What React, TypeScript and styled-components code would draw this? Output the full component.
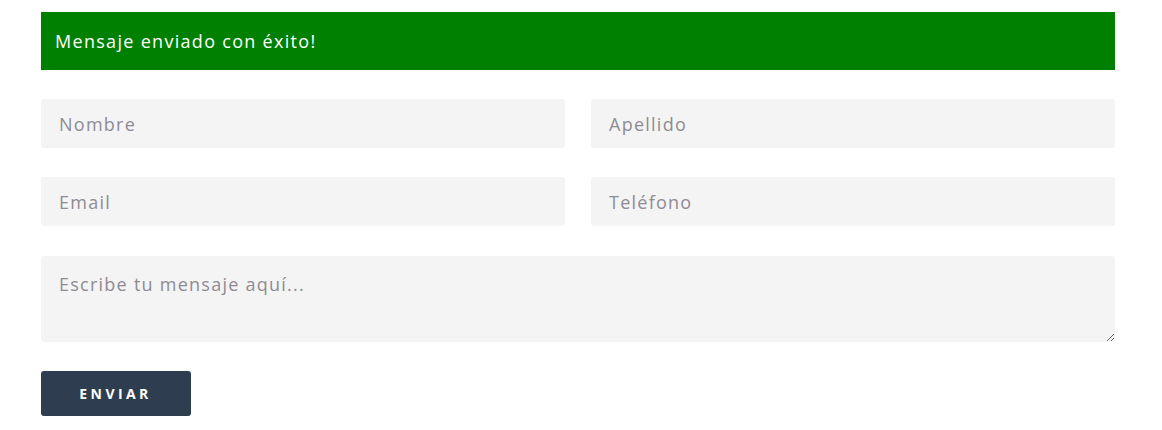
import styled, { createGlobalStyle } from 'styled-components';

const GlobalStyle = createGlobalStyle`
  body {
    margin: 0;
    background: #ffffff;
    font-family: "Open Sans", "Liberation Sans", sans-serif;
  }
`;

const Wrapper = styled.div`
  padding: 12px 47px 0 41px;
  width: 1074px;
`;

const Notice = styled.div`
  background-color: #008000;
  color: #ffffff;
  height: 58px;
  display: flex;
  align-items: center;
  padding: 0 14px;
  font-size: 18px;
  letter-spacing: 1.3px;
  box-sizing: border-box;
`;

const Form = styled.form`
  display: flex;
  flex-direction: column;
  gap: 29px;
  margin-top: 29px;
`;

const Row = styled.div`
  display: grid;
  grid-template-columns: 1fr 1fr;
  gap: 26px;
`;

const Field = styled.input`
  height: 49px;
  box-sizing: border-box;
  border: none;
  outline: none;
  border-radius: 3px;
  background: #f4f4f4;
  padding: 0 18px;
  font-family: "Open Sans", "Liberation Sans", sans-serif;
  font-size: 18px;
  letter-spacing: 1.25px;
  color: #333;

  &::placeholder {
    color: #8f8b93;
  }
`;

const Message = styled.textarea`
  height: 86px;
  box-sizing: border-box;
  border: none;
  outline: none;
  border-radius: 3px;
  background: #f4f4f4;
  padding: 16px 18px;
  margin-top: 1px;
  font-family: "Open Sans", "Liberation Sans", sans-serif;
  font-size: 18px;
  letter-spacing: 1.25px;
  color: #333;
  resize: vertical;

  &::placeholder {
    color: #8f8b93;
  }
`;

const SubmitButton = styled.button`
  width: 150px;
  height: 45px;
  border: none;
  border-radius: 3px;
  background: #2e3e50;
  color: #ffffff;
  font-family: "Open Sans", "Liberation Sans", sans-serif;
  font-weight: 700;
  font-size: 14px;
  letter-spacing: 3.4px;
  padding-left: 5px;
  cursor: pointer;
`;

const App = () => {
  return (
    <>
      <GlobalStyle />
      <Wrapper>
        <Notice>Mensaje enviado con éxito!</Notice>
        <Form onSubmit={(e) => e.preventDefault()}>
          <Row>
            <Field placeholder="Nombre" />
            <Field placeholder="Apellido" />
          </Row>
          <Row>
            <Field placeholder="Email" />
            <Field placeholder="Teléfono" />
          </Row>
          <Message placeholder="Escribe tu mensaje aquí..." />
          <div>
            <SubmitButton type="submit">ENVIAR</SubmitButton>
          </div>
        </Form>
      </Wrapper>
    </>
  );
};

export default App;
